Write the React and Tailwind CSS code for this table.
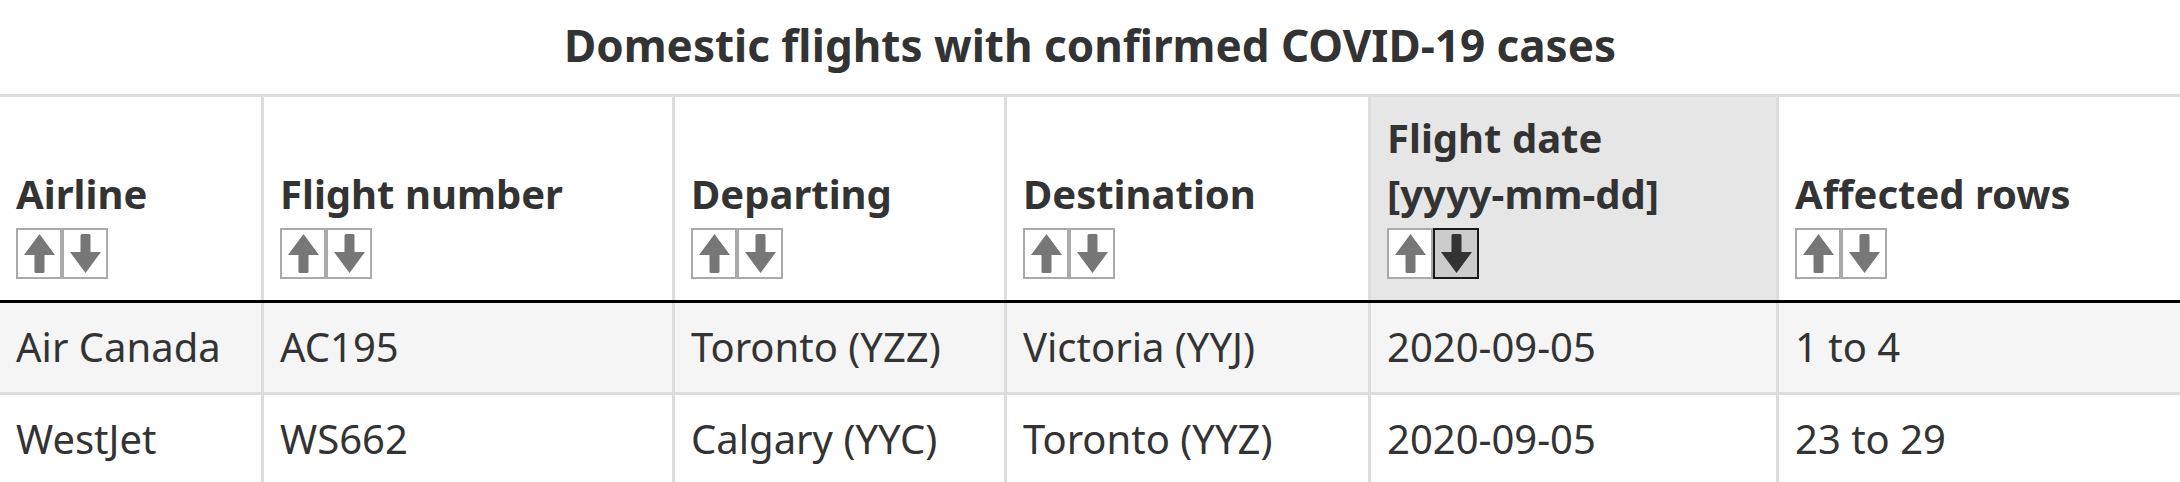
import { useState } from 'react'

const columns = [
  { key: 'airline', label: ['Airline'] },
  { key: 'flight', label: ['Flight number'] },
  { key: 'from', label: ['Departing'] },
  { key: 'to', label: ['Destination'] },
  { key: 'date', label: ['Flight date', '[yyyy-mm-dd]'] },
  { key: 'rows', label: ['Affected rows'] }
]

const flights = [
  { airline: 'Air Canada', flight: 'AC195', from: 'Toronto (YZZ)', to: 'Victoria (YYJ)', date: '2020-09-05', rows: '1 to 4' },
  { airline: 'WestJet', flight: 'WS662', from: 'Calgary (YYC)', to: 'Toronto (YYZ)', date: '2020-09-05', rows: '23 to 29' }
]

const gridCols = 'grid grid-cols-[261px_411px_332px_364px_408px_404px]'

const ArrowUp = ({ color }) => (
  <svg width="31" height="39" viewBox="0 0 31 39">
    <path d="M15.5 0 L31 21 L20.5 21 L20.5 37.5 Q20.5 39 19 39 L12 39 Q10.5 39 10.5 37.5 L10.5 21 L0 21 Z" fill={color} />
  </svg>
)

const ArrowDown = ({ color }) => (
  <svg width="31" height="39" viewBox="0 0 31 39">
    <path d="M15.5 39 L31 18 L20.5 18 L20.5 1.5 Q20.5 0 19 0 L12 0 Q10.5 0 10.5 1.5 L10.5 18 L0 18 Z" fill={color} />
  </svg>
)

const SortButtons = ({ colKey, sort, onSort }) => {
  const upActive = sort.key === colKey && sort.dir === 'asc'
  const downActive = sort.key === colKey && sort.dir === 'desc'
  return (
    <div className="flex mt-[6px]">
      <button
        onClick={() => onSort(colKey, 'asc')}
        className={`w-[46px] h-[51px] border-2 flex items-center justify-center ${
          upActive ? 'bg-[#cccccc] border-[#1a1a1a]' : 'bg-white border-[#aaaaaa]'
        }`}
      >
        <ArrowUp color={upActive ? '#333333' : '#777777'} />
      </button>
      <button
        onClick={() => onSort(colKey, 'desc')}
        className={`w-[46px] h-[51px] border-2 flex items-center justify-center ${
          downActive ? 'bg-[#cccccc] border-[#1a1a1a]' : 'bg-white border-[#aaaaaa]'
        }`}
      >
        <ArrowDown color={downActive ? '#333333' : '#777777'} />
      </button>
    </div>
  )
}

export default function App() {
  const [sort, setSort] = useState({ key: 'date', dir: 'desc' })

  const onSort = (key, dir) => setSort({ key, dir })

  return (
    <div className="w-[2180px] bg-white text-[#333333] font-['Noto_Sans',sans-serif] text-[40px] leading-[56px] overflow-hidden">
      <div className="h-[94px] pt-[17px] text-center font-bold text-[44px]">
        Domestic flights with confirmed COVID-19 cases
      </div>

      {/* header */}
      <div className={`${gridCols} border-t-[3px] border-b-[3px] border-t-[#dddddd] border-b-black`}>
        {columns.map((col, i) => (
          <div
            key={col.key}
            className={`h-[203px] flex flex-col justify-end pl-[16px] pb-[21px] font-bold ${
              i > 0 ? 'border-l-[3px] border-[#dddddd]' : ''
            } ${sort.key === col.key ? 'bg-[#e6e6e6]' : 'bg-white'}`}
          >
            <div>
              {col.label.map((line) => (
                <div key={line} className="whitespace-nowrap">{line}</div>
              ))}
            </div>
            <SortButtons colKey={col.key} sort={sort} onSort={onSort} />
          </div>
        ))}
      </div>

      {/* body */}
      {flights.map((row, r) => (
        <div
          key={row.flight}
          className={`${gridCols} ${r % 2 === 0 ? 'bg-[#f5f5f5]' : 'bg-white'} ${
            r < flights.length - 1 ? 'border-b-[3px] border-[#dddddd]' : ''
          }`}
        >
          {columns.map((col, i) => (
            <div
              key={col.key}
              className={`pl-[16px] pt-[16px] pb-[17px] whitespace-nowrap ${
                i > 0 ? 'border-l-[3px] border-[#dddddd]' : ''
              }`}
            >
              {row[col.key]}
            </div>
          ))}
        </div>
      ))}
    </div>
  )
}
